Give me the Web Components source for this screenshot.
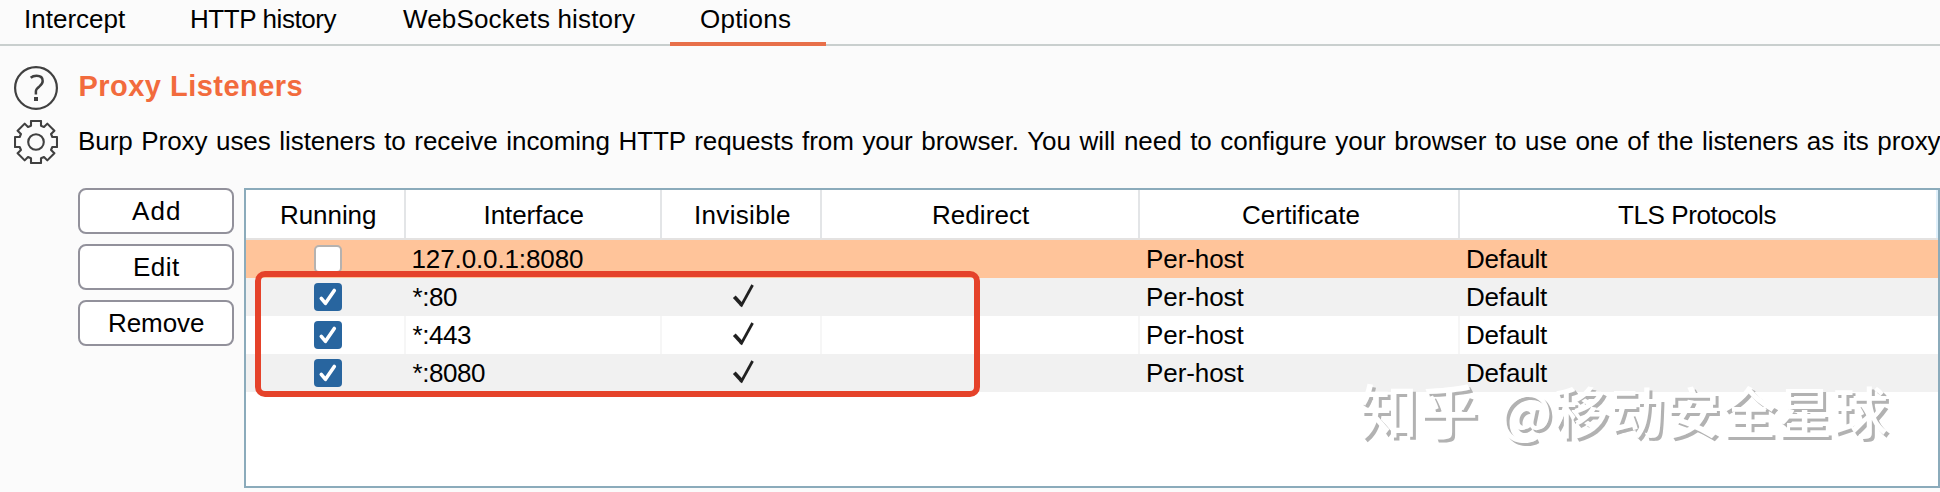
<!DOCTYPE html>
<html lang="en">
<head>
<meta charset="utf-8">
<title>Proxy Options</title>
<style>
html,body{margin:0;padding:0}
body{width:1940px;height:492px;overflow:hidden;background:#fbfbfb;color:#000;font:26px/38px "Liberation Sans",Arial,sans-serif}
</style>
</head>
<body>
<proxy-options></proxy-options>
<script>
const define = (name, html, ready) => {
  const template = document.createElement('template');
  template.innerHTML = html;
  customElements.define(name, class extends HTMLElement {
    connectedCallback() {
      if (this.shadowRoot) return;
      this.attachShadow({ mode: 'open' }).append(template.content.cloneNode(true));
      if (ready) ready.call(this, this.shadowRoot);
    }
  });
};

const pen = document.createElement('canvas').getContext('2d');

/* A label whose glyphs span exactly `w` pixels; `ws` widens the word gaps. */
define('ui-label', `<style>
:host{display:block;white-space:pre;flex:none}
span{display:block}
</style><span><slot></slot></span>`, function (root) {
  const w = +this.getAttribute('w'), ws = +(this.getAttribute('ws') || 0);
  const text = this.textContent, cs = getComputedStyle(this);
  pen.font = `${cs.fontWeight} ${cs.fontSize} ${cs.fontFamily}`;
  const m = pen.measureText(text);
  const spaces = text.split(' ').length - 1;
  const ink = m.actualBoundingBoxLeft + m.actualBoundingBoxRight + spaces * ws;
  const span = root.querySelector('span');
  this.style.width = w + 'px';
  span.style.letterSpacing = (w - ink) / (text.length - 1) + 'px';
  span.style.wordSpacing = ws + 'px';
  span.style.marginLeft = m.actualBoundingBoxLeft + 'px';
});

define('ui-tab', `<style>
:host{display:block;box-sizing:border-box;height:46px;border-bottom:4px solid transparent}
:host([active]){border-color:#e8704a}
</style><slot></slot>`);

define('tab-bar', `<style>
:host{display:flex;height:46px;background:linear-gradient(#c9cfce,#c9cfce) 0 44px/100% 2px no-repeat}
ui-tab:nth-of-type(1){width:156px;padding-left:26px}
ui-tab:nth-of-type(2){width:205px;padding-left:31px;margin-left:5px}
ui-tab:nth-of-type(3){width:293px;padding-left:31px;margin-left:6px}
ui-tab:nth-of-type(4){width:156px;padding-left:31px;margin-left:5px}
</style>
<ui-tab><ui-label w="100">Intercept</ui-label></ui-tab>
<ui-tab><ui-label w="145">HTTP history</ui-label></ui-tab>
<ui-tab><ui-label w="232">WebSockets history</ui-label></ui-tab>
<ui-tab active><ui-label w="90">Options</ui-label></ui-tab>`);

define('help-icon', `<style>:host,svg{display:block;width:44px;height:44px}</style>
<svg viewBox="-22 -22 44 44" fill="none" stroke="#404040" stroke-width="2.2">
<circle r="20.9"/>
<path d="M-5.3-10.3Q-3-12.2.5-12.2Q6.7-12.2 6.7-7Q6.7-4.3 3.4-1.6Q-.1 1.1-.1 3.2V6.6" stroke-width="2.5"/>
<rect x="-2" y="9" width="4" height="4" fill="#404040" stroke="none"/></svg>`);

define('gear-icon', `<style>:host,svg{display:block;width:44px;height:44px}</style>
<svg viewBox="-22 -22 44 44" fill="none" stroke="#404040" stroke-width="2.1" stroke-linejoin="round">
<circle r="7.8"/><path/></svg>`, function (root) {
  const tooth = [[-5, -16.3], [-5, -21], [5, -21], [5, -16.3]];
  const points = [];
  for (let k = 0; k < 8; k++) {
    const a = k * Math.PI / 4, c = Math.cos(a), s = Math.sin(a);
    for (const [x, y] of tooth) points.push((x * c - y * s).toFixed(2) + ' ' + (x * s + y * c).toFixed(2));
  }
  root.querySelector('path').setAttribute('d', 'M' + points.join('L') + 'Z');
});

define('section-intro', `<style>
:host{display:grid;grid-template-columns:44px 1fr;column-gap:21px;row-gap:10px;padding:20px 0 0 14px;height:98px}
.title{font-size:29px;font-weight:700;color:#f26b3d;line-height:40px}
.text{line-height:42px}
ui-label{margin-left:.5px}
.text ui-label{margin-left:1px}
</style>
<help-icon></help-icon><div class="title"><ui-label w="222">Proxy Listeners</ui-label></div>
<gear-icon></gear-icon><div class="text"><ui-label w="1861.5" ws="1.5">Burp Proxy uses listeners to receive incoming HTTP requests from your browser. You will need to configure your browser to use one of the listeners as its proxy</ui-label></div>`);

define('ui-button', `<style>
:host{display:flex;box-sizing:border-box;width:156px;height:46px;border:2px solid #92919b;border-radius:8px;background:#fff;align-items:center;justify-content:center}
</style><slot></slot>`);

define('check-box', `<style>
:host{display:block;box-sizing:border-box;width:28px;height:28px;border-radius:5px;background:#fff;border:2px solid #b5b2b0}
svg{display:none;width:28px;height:28px}
:host([checked]){background:#28659f;border:0;border-radius:4px}
:host([checked]) svg{display:block}
</style><svg viewBox="0 0 28 28" fill="none" stroke="#fff" stroke-width="3.6" stroke-linecap="round" stroke-linejoin="round"><path d="M7.3 15.3L11.5 20.3L20.3 7.5"/></svg>`);

define('tick-mark', `<style>:host,svg{display:block;width:24px;height:26px}</style>
<svg viewBox="0 0 24 26" fill="none" stroke="#202020"><path d="M2.3 12.8L9.2 20.2" stroke-width="3.8"/><path d="M8.8 22.5L20.6 1" stroke-width="2.7"/></svg>`);

define('listener-row', `<style>
:host{display:grid;grid-template-columns:160px 256px 160px 318px 320px 1fr;height:38px;line-height:26px;background:#fff;--line:#f6f6f6}
:host([selected]){background:#ffc49a;--line:#ffc49a}
:host([striped]){background:#f1f1f1;--line:#f1f1f1}
div{display:flex;align-items:center;border-right:2px solid var(--line);box-sizing:border-box;padding-left:8px}
div:nth-of-type(2){padding-left:6.5px}
div:last-child{border:0}
check-box{margin:-1px 0 0 60px}
tick-mark{margin:-1px 0 0 61.5px}
</style>
<div></div><div><slot></slot></div><div></div><div></div>
<div><ui-label w="96.5">Per-host</ui-label></div>
<div><ui-label w="80">Default</ui-label></div>`, function (root) {
  const cells = root.querySelectorAll('div');
  const box = document.createElement('check-box');
  if (this.hasAttribute('running')) box.setAttribute('checked', '');
  cells[0].append(box);
  if (this.hasAttribute('invisible')) cells[2].append(document.createElement('tick-mark'));
});

define('listener-table', `<style>
:host{display:block;box-sizing:border-box;position:relative;width:1696px;height:300px;border:2px solid #8babbb;background:#fff}
header{display:grid;grid-template-columns:160px 256px 160px 318px 320px 1fr;height:48px;border-bottom:2px solid #e4e2e1}
header div{border-right:2px solid #e3e5e7;box-sizing:border-box;padding-top:6px}
header div:last-child{border-color:#dff0fb}
.frame{position:absolute;left:9px;top:81.4px;width:712.5px;height:113.4px;border:6px solid #e5422a;border-radius:10px}
.mark{position:absolute;left:1114px;top:194px;display:flex;gap:26px;font:500 55px/50px "Noto Sans CJK SC",sans-serif;color:#fff;text-shadow:3px 3px 0 #b2b2b2}
.mark ui-label:first-child{font-size:59px}
</style>
<header>
<div style="padding-left:36px"><ui-label w="93">Running</ui-label></div>
<div style="padding-left:79.5px"><ui-label w="98">Interface</ui-label></div>
<div style="padding-left:34px"><ui-label w="94">Invisible</ui-label></div>
<div style="padding-left:112px"><ui-label w="96">Redirect</ui-label></div>
<div style="padding-left:103px"><ui-label w="116.5">Certificate</ui-label></div>
<div style="padding-left:158px"><ui-label w="158.5">TLS Protocols</ui-label></div>
</header>
<listener-row selected><ui-label w="170.5">127.0.0.1:8080</ui-label></listener-row>
<listener-row striped running invisible><ui-label w="44.5">*:80</ui-label></listener-row>
<listener-row running invisible><ui-label w="58.5">*:443</ui-label></listener-row>
<listener-row striped running invisible><ui-label w="72.5">*:8080</ui-label></listener-row>
<div class="frame"></div>
<div class="mark"><ui-label w="116">知乎</ui-label><ui-label w="385">@移动安全星球</ui-label></div>`);

define('proxy-options', `<style>
:host{display:block}
main{display:flex;gap:10px;padding:24px 0 0 78px}
nav{display:flex;flex-direction:column;gap:10px}
</style>
<tab-bar></tab-bar>
<section-intro></section-intro>
<main>
<nav>
<ui-button><ui-label w="47" style="margin-right:1px">Add</ui-label></ui-button>
<ui-button><ui-label w="45" style="margin-left:3px">Edit</ui-label></ui-button>
<ui-button><ui-label w="94" style="margin-left:2px">Remove</ui-label></ui-button>
</nav>
<listener-table></listener-table>
</main>`);
</script>
</body>
</html>
